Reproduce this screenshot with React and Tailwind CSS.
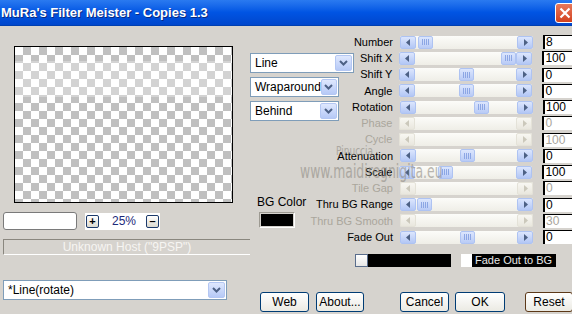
import React from "react";

const rows = [
  { label: "Number", pos: 2, value: "8" },
  { label: "Shift X", pos: 86, value: "100" },
  { label: "Shift Y", pos: 44, value: "0" },
  { label: "Angle", pos: 44, value: "0" },
  { label: "Rotation", pos: 58, value: "100" },
  { label: "Phase", pos: null, value: "0" },
  { label: "Cycle", pos: null, value: "100" },
  { label: "Attenuation", pos: 44, value: "0" },
  { label: "Scale", pos: 23, value: "100" },
  { label: "Tile Gap", pos: null, value: "0" },
  { label: "Thru BG Range", pos: 1, value: "0" },
  { label: "Thru BG Smooth", pos: null, value: "30" },
  { label: "Fade Out", pos: 44, value: "0" },
];

const ArrowBtn = ({ dir, disabled }) => (
  <div
    className={
      disabled
        ? "w-[16px] h-[13px] rounded-[2px] border border-[#e4e2d8] bg-linear-to-b from-[#f8f7f2] to-[#e9e7de] flex items-center justify-center"
        : "w-[16px] h-[13px] rounded-[2px] border border-[#aec3f2] bg-linear-to-b from-[#dce6fd] to-[#b3c7f5] flex items-center justify-center"
    }
  >
    <svg width="5" height="7" viewBox="0 0 5 7">
      {dir === "left" ? (
        <polygon points="4,0 4,7 0,3.5" fill={disabled ? "#cbc8bb" : "#4d6185"} />
      ) : (
        <polygon points="1,0 1,7 5,3.5" fill={disabled ? "#cbc8bb" : "#4d6185"} />
      )}
    </svg>
  </div>
);

const Thumb = ({ left }) => (
  <div
    className="absolute top-0 w-[15px] h-[13px] rounded-[2px] border border-[#aec3f2] bg-linear-to-b from-[#dce6fd] to-[#b9cbf6] flex items-center justify-center gap-[1px]"
    style={{ left }}
  >
    <div className="w-[1px] h-[6px] bg-[#8ca6e4]" />
    <div className="w-[1px] h-[6px] bg-[#8ca6e4]" />
    <div className="w-[1px] h-[6px] bg-[#8ca6e4]" />
    <div className="w-[1px] h-[6px] bg-[#8ca6e4]" />
  </div>
);

const Slider = ({ pos }) => {
  const disabled = pos === null;
  return (
    <div className="w-[133px] h-[13px] flex rounded-[2px] bg-linear-to-b from-[#fcfcf9] to-[#efeee7]">
      <ArrowBtn dir="left" disabled={disabled} />
      <div className="relative flex-1">{!disabled && <Thumb left={pos} />}</div>
      <ArrowBtn dir="right" disabled={disabled} />
    </div>
  );
};

const DropArrow = () => (
  <div className="w-[17px] h-full rounded-[2px] border border-[#b4c7f3] bg-linear-to-b from-[#dfe8fe] to-[#b6c9f6] flex items-center justify-center">
    <svg width="9" height="6" viewBox="0 0 9 6">
      <polyline points="1,1 4.5,4.5 8,1" fill="none" stroke="#4d6185" strokeWidth="2" />
    </svg>
  </div>
);

const Dropdown = ({ text, width }) => (
  <div
    className="h-[20px] bg-white border border-[#7f9db9] flex items-center p-[1px]"
    style={{ width }}
  >
    <span className="flex-1 pl-[3px] text-[12px] text-black leading-none">{text}</span>
    <DropArrow />
  </div>
);

const XpButton = ({ children, width, def }) => (
  <div
    className={
      def
        ? "h-[20px] rounded-[3px] border border-[#5c3818] bg-linear-to-b from-white to-[#ebeae3] flex items-center justify-center text-[12px] text-black"
        : "h-[20px] rounded-[3px] border border-[#003c74] bg-linear-to-b from-white to-[#ebeae3] flex items-center justify-center text-[12px] text-black"
    }
    style={{ width }}
  >
    {children}
  </div>
);

const SmallBtn = ({ children }) => (
  <div className="w-[13px] h-[13px] rounded-[2px] border border-[#1c3a6b] bg-linear-to-b from-white to-[#dcdad0] flex items-center justify-center text-[11px] font-bold leading-none text-black">
    {children}
  </div>
);

export default function App() {
  return (
    <div className="w-[572px] h-[314px] overflow-hidden bg-[#d6d3ce] flex flex-col font-['Liberation_Sans',Arial,sans-serif] text-[11px] text-black">
      {/* title bar */}
      <div className="h-[26px] flex items-center bg-linear-to-b from-[#2a7af0] via-[#0054e3] to-[#0046cc] border-b border-[#003fb0]">
        <span className="pl-[1px] text-[13px] font-bold text-white [text-shadow:1px_1px_0_#0a2a80] whitespace-nowrap">
          MuRa's Filter Meister - Copies 1.3
        </span>
        <div className="ml-auto -mr-[5px] w-[22px] h-[20px] rounded-[3px] border border-white bg-linear-to-b from-[#e8785a] to-[#d2401c] flex items-center pl-[3px]">
          <svg width="12" height="12" viewBox="0 0 12 12">
            <path d="M1.5 1.5 L10.5 10.5 M10.5 1.5 L1.5 10.5" stroke="white" strokeWidth="2.2" />
          </svg>
        </div>
      </div>

      {/* body */}
      <div className="relative flex-1 flex">
        {/* left column */}
        <div className="w-[250px] flex flex-col pl-[3px]">
          <div className="relative mt-[20px] ml-[11px] w-[219px] h-[157px] border border-black bg-[conic-gradient(#c0c0c0_25%,#ffffff_0_50%,#c0c0c0_0_75%,#ffffff_0)] bg-[length:16px_16px]">
            <div className="absolute left-0 right-0 top-[14px] h-[36px] bg-white/30" />
          </div>
          <div className="mt-[9px] flex items-center h-[18px]">
            <div className="w-[74px] h-[18px] rounded-[3px] border border-[#7a7a7a] bg-white" />
            <div className="ml-[8px] w-[75px] h-[17px] bg-white flex items-center">
              <div className="ml-[1px]">
                <SmallBtn>+</SmallBtn>
              </div>
              <span className="ml-[13px] text-[12px] text-[#1c2a7a]">25%</span>
              <div className="ml-auto mr-[1px]">
                <SmallBtn>–</SmallBtn>
              </div>
            </div>
          </div>
          <div className="mt-[9px] w-[247px] h-[16px] border-t border-l border-[#8a877f] border-b border-b-white flex items-center justify-center text-[12px] text-[#f6f5f2] whitespace-nowrap">
            Unknown Host ("9PSP")
          </div>
          <div className="mt-[25px]">
            <Dropdown text="*Line(rotate)" width={224} />
          </div>
        </div>

        {/* right area */}
        <div className="w-[322px] flex flex-col">
          <div className="flex h-[219px]">
            {/* middle controls */}
            <div className="w-[105px] flex flex-col pt-[27px]">
              <Dropdown text="Line" width={104} />
              <div className="mt-[4px]">
                <Dropdown text="Wraparound" width={89} />
              </div>
              <div className="mt-[4px]">
                <Dropdown text="Behind" width={89} />
              </div>
              <div className="mt-[74px] ml-[7px] text-[12px] leading-[14px]">BG Color</div>
              <div className="mt-[3px] ml-[9px] w-[36px] h-[16px] border border-t-[#9d9a92] border-l-[#9d9a92] border-r-white border-b-white p-[1px]">
                <div className="w-full h-full bg-black" />
              </div>
            </div>

            {/* parameter rows */}
            <div className="w-[217px] pt-[8px] flex flex-col">
              {rows.map((r) => (
                <div key={r.label} className="h-[16.25px] flex items-center">
                  <div
                    className={
                      r.pos === null
                        ? "w-[38px] flex justify-end whitespace-nowrap text-[#aaa69c]"
                        : "w-[38px] flex justify-end whitespace-nowrap"
                    }
                  >
                    {r.label}
                  </div>
                  <div className="ml-[7px]">
                    <Slider pos={r.pos} />
                  </div>
                  <div
                    className={
                      r.pos === null
                        ? "ml-[10px] w-[30px] h-[14px] bg-white border-l-2 border-t border-black pl-[1px] text-[12px] leading-[13px] text-[#a8a59c]"
                        : "ml-[10px] w-[30px] h-[14px] bg-white border-l-2 border-t border-black pl-[1px] text-[12px] leading-[13px]"
                    }
                  >
                    {r.value}
                  </div>
                </div>
              ))}
            </div>
          </div>

          {/* fade row */}
          <div className="mt-[9px] pl-[105px] flex items-center h-[13px]">
            <div className="w-[96px] h-[13px] bg-black flex">
              <div className="w-[13px] h-[13px] border border-[#5a6d8c] bg-linear-to-b from-white to-[#e6e6e6]" />
            </div>
            <div className="ml-[10px] w-[11px] h-[13px] bg-white" />
            <div className="w-[84px] h-[13px] bg-black text-[#e8e8e8] pl-[3px] text-[11px] leading-[13px] whitespace-nowrap">
              Fade Out to BG
            </div>
          </div>

          {/* buttons */}
          <div className="mt-[25px] flex">
            <div className="ml-[10px]">
              <XpButton width={49}>Web</XpButton>
            </div>
            <div className="ml-[7px]">
              <XpButton width={48}>About...</XpButton>
            </div>
            <div className="ml-[36px]">
              <XpButton width={49}>Cancel</XpButton>
            </div>
            <div className="ml-[6px]">
              <XpButton width={50}>OK</XpButton>
            </div>
            <div className="ml-[20px]">
              <XpButton width={48} def>
                Reset
              </XpButton>
            </div>
          </div>
        </div>

        {/* watermark */}
        <div className="absolute left-[300px] top-[118px] pointer-events-none text-[#8f8b83] opacity-60">
          <div className="ml-[36px] text-[12px] leading-[14px] font-['DejaVu_Sans',sans-serif] scale-x-75 origin-left">
            Pinuccia
          </div>
          <div className="mt-[3px] text-[20px] leading-[20px] font-['DejaVu_Sans',sans-serif] scale-x-[0.62] origin-left whitespace-nowrap">
            www.maidiregnigita.eu
          </div>
        </div>
      </div>
    </div>
  );
}
